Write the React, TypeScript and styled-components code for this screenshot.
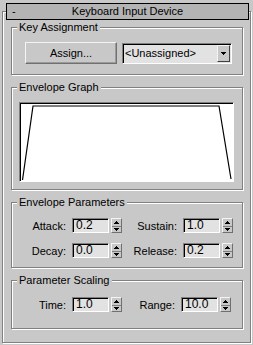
import React from 'react';
import styled, { createGlobalStyle } from 'styled-components';

const PANEL = '#c8c8c8';

const Global = createGlobalStyle`
  html, body { margin: 0; padding: 0; background: ${PANEL}; }
  body {
    font-family: "Liberation Sans", Arial, sans-serif;
    font-size: 11px;
    color: #000;
  }
  * { box-sizing: border-box; }
`;

const Page = styled.div`
  width: 253px;
  height: 345px;
  padding: 0 2px;
  background: ${PANEL};
  overflow: hidden;
`;

const Rollout = styled.fieldset`
  margin: 3px 0 0 0;
  padding: 0;
  width: 249px;
  min-inline-size: 0;
  border: 1px solid #808080;
  box-shadow: inset 1px 1px 0 #fff, 1px 1px 0 #fff;
`;

const TitleBar = styled.legend`
  margin-left: 3px;
  padding: 0;
  width: 243px;
  height: 17px;
  background: #b4b4b4;
  border: 1px solid #000;
  display: grid;
  grid-template-columns: 1fr auto 1fr;
  align-items: center;
  line-height: 15px;
`;

const Collapse = styled.span`
  justify-self: start;
  padding-left: 5px;
`;

const TitleText = styled.span`
  white-space: nowrap;
`;

const Stack = styled.div`
  display: flex;
  flex-direction: column;
  gap: 6px;
  padding: 1px 0 13px 8px;
`;

const Group = styled.fieldset`
  margin: 0;
  padding: 0;
  width: 232px;
  min-inline-size: 0;
  border: 1px solid #808080;
  box-shadow: inset 1px 1px 0 #fff, 1px 1px 0 #fff;
`;

const GroupTitle = styled.legend`
  margin-left: 5px;
  padding: 0 2px;
  height: 13px;
  line-height: 13px;
  background: ${PANEL};
  white-space: nowrap;
`;

const Body = styled.div<{ $pad: string }>`
  padding: ${(p) => p.$pad};
`;

const AssignRow = styled.div`
  display: flex;
  align-items: center;
  gap: 5px;
`;

const Button = styled.div`
  width: 92px;
  height: 22px;
  display: flex;
  align-items: center;
  justify-content: center;
  background: ${PANEL};
  border: 1px solid;
  border-color: #f4f4f4 #707070 #707070 #f4f4f4;
  box-shadow: inset -1px -1px 0 #9a9a9a;
`;

const Sunken = styled.div`
  background: #e2e2e2;
  border: 1px solid;
  border-color: #808080 #fff #fff #808080;
  box-shadow: inset 1px 1px 0 #000;
`;

const Dropdown = styled(Sunken)`
  width: 110px;
  height: 21px;
  display: flex;
  align-items: center;
  padding: 1px 1px 1px 2px;
`;

const DropText = styled.span`
  flex: 1;
  white-space: nowrap;
`;

const DropButton = styled.div`
  width: 13px;
  height: 17px;
  display: flex;
  align-items: center;
  justify-content: center;
  background: ${PANEL};
  border: 1px solid;
  border-color: #f4f4f4 #404040 #404040 #f4f4f4;
`;

const Graph = styled(Sunken)`
  width: 215px;
  height: 80px;
  margin-left: 7px;
  background: #fff;
  padding: 1px 0 0 1px;
`;

const ParamRow = styled.div`
  display: flex;
`;

const ParamCell = styled.div`
  display: flex;
  align-items: center;
`;

const Label = styled.span<{ $w: number }>`
  width: ${(p) => p.$w}px;
  margin-right: 6px;
  text-align: right;
  white-space: nowrap;
`;

const Field = styled(Sunken)`
  width: 37px;
  height: 15px;
  margin-right: 2px;
  padding: 0 0 0 3px;
  line-height: 13px;
  font-size: 12px;
`;

const Spinner = styled.div`
  width: 11px;
  height: 15px;
  display: grid;
  grid-template-rows: 1fr 1fr;
  background: ${PANEL};
  border: 1px solid;
  border-color: #f4f4f4 #707070 #707070 #f4f4f4;
`;

const SpinHalf = styled.div<{ $bottom?: boolean }>`
  display: flex;
  align-items: center;
  justify-content: center;
  border-top: ${(p) => (p.$bottom ? '1px solid #808080' : 'none')};
`;

const RowGap = styled.div`
  height: 10px;
`;

const Tri = ({ up }: { up?: boolean }) => (
  <svg width="5" height="3" viewBox="0 0 5 3" shapeRendering="crispEdges">
    <polygon points={up ? '2.5,0 5,3 0,3' : '0,0 5,0 2.5,3'} fill="#000" />
  </svg>
);

const Param = ({ label, value, w }: { label: string; value: string; w: number }) => (
  <ParamCell>
    <Label $w={w}>{label}</Label>
    <Field>{value}</Field>
    <Spinner>
      <SpinHalf>
        <Tri up />
      </SpinHalf>
      <SpinHalf $bottom>
        <Tri />
      </SpinHalf>
    </Spinner>
  </ParamCell>
);

export default function App() {
  return (
    <Page>
      <Global />
      <Rollout>
        <TitleBar>
          <Collapse>-</Collapse>
          <TitleText>Keyboard Input Device</TitleText>
          <span />
        </TitleBar>
        <Stack>
          <Group>
            <GroupTitle>Key Assignment</GroupTitle>
            <Body $pad="8px 0 10px 13px">
              <AssignRow>
                <Button>Assign...</Button>
                <Dropdown>
                  <DropText>&lt;Unassigned&gt;</DropText>
                  <DropButton>
                    <Tri />
                  </DropButton>
                </Dropdown>
              </AssignRow>
            </Body>
          </Group>
          <Group>
            <GroupTitle>Envelope Graph</GroupTitle>
            <Body $pad="8px 0 7px 0">
              <Graph>
                <svg width="211" height="76" viewBox="0 0 211 76">
                  <polyline
                    points="1.5,76 12,2 198,2 210,75"
                    fill="none"
                    stroke="#000"
                    strokeWidth="1.2"
                  />
                </svg>
              </Graph>
            </Body>
          </Group>
          <Group>
            <GroupTitle>Envelope Parameters</GroupTitle>
            <Body $pad="9px 0 9px 0">
              <ParamRow>
                <Param label="Attack:" value="0.2" w={54} />
                <Param label="Sustain:" value="1.0" w={55} />
              </ParamRow>
              <RowGap />
              <ParamRow>
                <Param label="Decay:" value="0.0" w={54} />
                <Param label="Release:" value="0.2" w={55} />
              </ParamRow>
            </Body>
          </Group>
          <Group>
            <GroupTitle>Parameter Scaling</GroupTitle>
            <Body $pad="10px 0 16px 0">
              <ParamRow>
                <Param label="Time:" value="1.0" w={54} />
                <Param label="Range:" value="10.0" w={53} />
              </ParamRow>
            </Body>
          </Group>
        </Stack>
      </Rollout>
    </Page>
  );
}
